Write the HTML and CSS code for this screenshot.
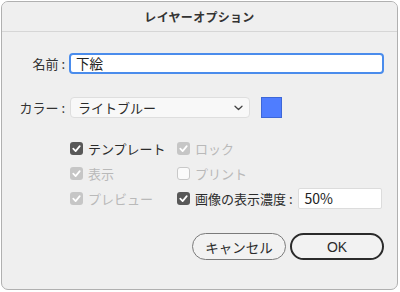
FILE: index.html
```html
<!DOCTYPE html>
<html lang="ja">
<head>
<meta charset="utf-8">
<link rel="stylesheet" href="styles.css">
</head>
<body>
<div class="window">
  <div class="titlebar">レイヤーオプション</div>
  <div class="content">
    <div class="form">
      <label class="label">名前 :</label>
      <div class="textfield focused">下絵</div>
      <label class="label label-color">カラー :</label>
      <div class="color-row">
        <div class="select">
          <span>ライトブルー</span>
          <svg class="chevron" width="9" height="6" viewBox="0 0 9 6"><path d="M1 1.2 L4.5 4.5 L8 1.2" fill="none" stroke="#444" stroke-width="1.3" stroke-linecap="round" stroke-linejoin="round"/></svg>
        </div>
        <div class="swatch"></div>
      </div>
    </div>

    <div class="checks">
      <div class="check"><span class="box on"><svg viewBox="0 0 12 12"><path d="M3 6.2 L5.2 8.4 L9 3.8" fill="none" stroke="#fff" stroke-width="1.6" stroke-linecap="round" stroke-linejoin="round"/></svg></span><span class="ctext">テンプレート</span></div>
      <div class="check disabled"><span class="box dis"><svg viewBox="0 0 12 12"><path d="M3 6.2 L5.2 8.4 L9 3.8" fill="none" stroke="#fff" stroke-width="1.6" stroke-linecap="round" stroke-linejoin="round"/></svg></span><span class="ctext">ロック</span></div>
      <div class="check disabled"><span class="box dis"><svg viewBox="0 0 12 12"><path d="M3 6.2 L5.2 8.4 L9 3.8" fill="none" stroke="#fff" stroke-width="1.6" stroke-linecap="round" stroke-linejoin="round"/></svg></span><span class="ctext">表示</span></div>
      <div class="check disabled"><span class="box off"></span><span class="ctext">プリント</span></div>
      <div class="check disabled"><span class="box dis"><svg viewBox="0 0 12 12"><path d="M3 6.2 L5.2 8.4 L9 3.8" fill="none" stroke="#fff" stroke-width="1.6" stroke-linecap="round" stroke-linejoin="round"/></svg></span><span class="ctext">プレビュー</span></div>
      <div class="check"><span class="box on"><svg viewBox="0 0 12 12"><path d="M3 6.2 L5.2 8.4 L9 3.8" fill="none" stroke="#fff" stroke-width="1.6" stroke-linecap="round" stroke-linejoin="round"/></svg></span><span class="ctext">画像の表示濃度 :</span><div class="textfield small">50%</div></div>
    </div>

    <div class="buttons">
      <button class="btn">キャンセル</button>
      <button class="btn default">OK</button>
    </div>
  </div>
</div>
</body>
</html>
```
FILE: styles.css
```css
* { box-sizing: border-box; }
html, body { margin: 0; padding: 0; background: #ffffff; }
body {
  font-family: "Noto Sans CJK JP", "Noto Sans", sans-serif;
  color: #2b2b2b;
  padding: 1px 0 0 1px;
}
.window {
  width: 397px;
  height: 289px;
  border: 1px solid #b0b0b0;
  border-radius: 7px;
  background: #efefef;
  overflow: hidden;
}
.titlebar {
  height: 30px;
  border-bottom: 1px solid #d6d6d6;
  display: flex;
  align-items: center;
  justify-content: center;
  font-size: 12px;
  font-weight: bold;
  color: #333;
  letter-spacing: 0.3px;
  background: #efefef;
}
.content {
  padding: 21px 13px 0 0;
  display: flex;
  flex-direction: column;
}
.form {
  display: grid;
  grid-template-columns: 63px 1fr;
  column-gap: 4px;
  row-gap: 23px;
  align-items: center;
}
.label {
  text-align: right;
  font-size: 13px;
  color: #333;
  line-height: 21px;
  white-space: nowrap;
}
.textfield {
  height: 21px;
  background: #fff;
  border: 1px solid #dcdcdc;
  border-radius: 2px;
  font-size: 13.5px;
  line-height: 19px;
  padding-left: 6px;
  color: #222;
}
.textfield.focused {
  border: 2px solid #4a8cec;
  border-radius: 4px;
  line-height: 17px;
  padding-left: 5px;
}
.color-row {
  display: flex;
  align-items: center;
  gap: 11px;
  padding-left: 1px;
}
.select {
  width: 180px;
  height: 21px;
  background: #f8f8f8;
  border: 1px solid #dedede;
  border-radius: 4px;
  display: flex;
  align-items: center;
  justify-content: space-between;
  padding: 0 6px 0 7px;
  font-size: 13px;
  color: #2b2b2b;
}
.chevron { display: block; }
.swatch {
  width: 21px;
  height: 21px;
  background: #4f7dff;
  border: 1px solid #3d67d8;
}
.checks {
  margin-top: 18px;
  margin-left: 68px;
  display: grid;
  grid-template-columns: 107px 1fr;
  grid-auto-rows: 25px;
  align-items: center;
}
.check {
  display: flex;
  align-items: center;
  gap: 5px;
  font-size: 13px;
  color: #2b2b2b;
  white-space: nowrap;
}
.check.disabled { color: #b9b9b9; }
.box {
  width: 13px;
  height: 13px;
  border-radius: 3px;
  flex: none;
  display: flex;
}
.box svg { width: 13px; height: 13px; }
.box.on { background: #585858; }
.box.dis { background: #c6c6c6; }
.box.off { background: #fafafa; border: 1px solid #c8c8c8; }
.textfield.small {
  flex: none;
  width: 84px;
  margin-left: 0;
  font-size: 14px;
  line-height: 19px;
}
.buttons {
  margin-top: 22px;
  display: flex;
  justify-content: flex-end;
  gap: 4px;
}
.btn {
  width: 94px;
  height: 27px;
  border-radius: 14px;
  border: 1px solid #7a7a7a;
  background: #f2f2f2;
  font-family: "Noto Sans CJK JP", "Noto Sans", sans-serif;
  font-size: 13.5px;
  color: #2b2b2b;
  padding: 0;
}
.btn.default {
  border: 2px solid #2b2b2b;
  font-family: "Liberation Sans", "Noto Sans CJK JP", sans-serif;
  font-size: 14px;
}
```
